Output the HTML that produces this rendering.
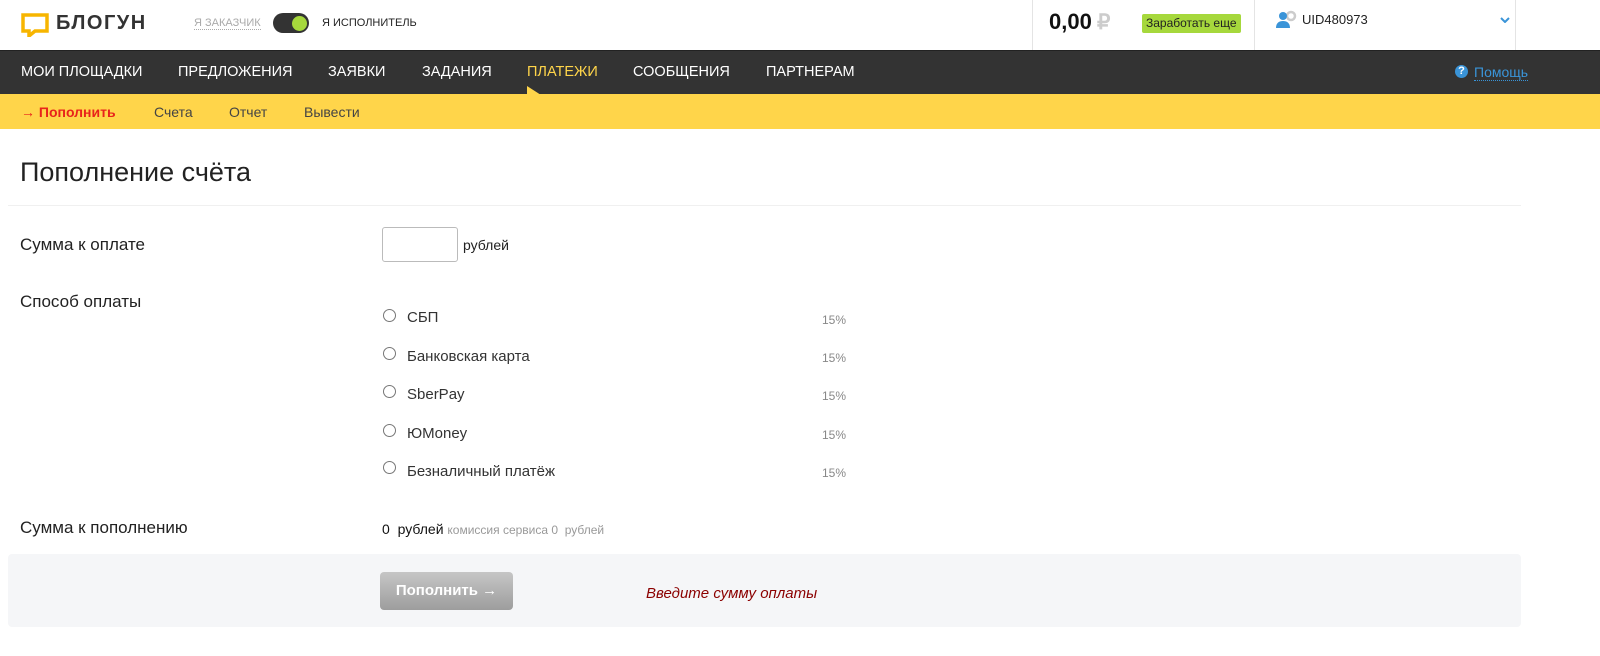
<!DOCTYPE html>
<html><head><meta charset="utf-8"><style>
*{margin:0;padding:0;box-sizing:border-box}
body{width:1600px;height:656px;background:#fff;font-family:"Liberation Sans",Arial,sans-serif;color:#222;position:relative;overflow:hidden}
.a{position:absolute;white-space:nowrap}
.nav{position:absolute;left:0;top:50px;width:1600px;height:44px;background:#333;border-top:1px solid #222}
.nav span{position:absolute;top:13px;color:#fff;font-size:14.5px}
.sub{position:absolute;left:0;top:94px;width:1600px;height:35px;background:#ffd54a}
.sub span{position:absolute;top:10px;font-size:14px;color:#444}
.lbl{font-size:17px;color:#222}
.radio{position:absolute;width:13px;height:13px;border:1px solid #777;border-radius:50%}
.opt{font-size:15px;color:#333}
.pc{font-size:12px;color:#888}
</style></head><body>
<svg class="a" style="left:21px;top:13px" width="28" height="24" viewBox="0 0 28 24"><path d="M2 2h24v16H14l-6 5v-5H2z" fill="none" stroke="#f7b500" stroke-width="3.5" stroke-linejoin="miter"/></svg>
<div class="a" style="left:56px;top:12px;font-size:20px;font-weight:bold;color:#333;letter-spacing:1.5px">БЛОГУН</div>
<div class="a" style="left:194px;top:17px;font-size:11px;color:#aaa;border-bottom:1px dotted #aaa">Я ЗАКАЗЧИК</div>
<div class="a" style="left:273px;top:13px;width:36px;height:20px;border-radius:10px;background:#333"></div>
<div class="a" style="left:292px;top:16px;width:15px;height:15px;border-radius:50%;background:#a6d83c"></div>
<div class="a" style="left:322px;top:17px;font-size:11px;color:#222">Я ИСПОЛНИТЕЛЬ</div>
<div class="a" style="left:1032px;top:0;width:1px;height:50px;background:#e4e4e4"></div>
<div class="a" style="left:1254px;top:0;width:1px;height:50px;background:#e4e4e4"></div>
<div class="a" style="left:1515px;top:0;width:1px;height:50px;background:#e4e4e4"></div>
<div class="a" style="left:1049px;top:9px;font-size:22px;font-weight:bold;color:#111">0,00</div>
<div class="a" style="left:1097px;top:10px;font-size:21px;font-weight:bold;color:#ccc">₽</div>
<div class="a" style="left:1142px;top:14px;height:19px;padding:1px 4px;background:#a6d83c;border-radius:2px;font-size:12px;color:#222;line-height:17px">Заработать еще</div>
<svg class="a" style="left:1275px;top:10px" width="24" height="20" viewBox="0 0 24 20"><circle cx="16" cy="6" r="4" fill="none" stroke="#ccc" stroke-width="2.5"/><circle cx="8" cy="6" r="4" fill="#3a94d8"/><path d="M1 18c0-5 3-7 7-7s7 2 7 7z" fill="#3a94d8"/></svg>
<div class="a" style="left:1302px;top:12px;font-size:13px;color:#222">UID480973</div>
<svg class="a" style="left:1500px;top:17px" width="10" height="6"><path d="M1 1l4 4 4-4" fill="none" stroke="#3a94d8" stroke-width="2"/></svg>
<div class="nav">
<span style="left:21px">МОИ ПЛОЩАДКИ</span>
<span style="left:178px">ПРЕДЛОЖЕНИЯ</span>
<span style="left:328px">ЗАЯВКИ</span>
<span style="left:422px">ЗАДАНИЯ</span>
<span style="left:527px;color:#ffd54a">ПЛАТЕЖИ</span>
<span style="left:633px">СООБЩЕНИЯ</span>
<span style="left:766px">ПАРТНЕРАМ</span>
<span style="left:1455px;top:14px;width:13px;height:13px;border-radius:50%;background:#3a94d8;font-size:11px;font-weight:bold;text-align:center;line-height:13px">?</span>
<span style="left:1474px;top:13px;font-size:14px;color:#3a94d8;border-bottom:1px dotted #3a94d8">Помощь</span>
</div>
<svg class="a" style="left:527px;top:86px" width="14" height="9"><path d="M0 0L14 9H0z" fill="#ffd54a"/></svg>
<div class="sub">
<span style="left:21px;color:#e8231b;font-weight:bold">→ Пополнить</span>
<span style="left:154px">Счета</span>
<span style="left:229px">Отчет</span>
<span style="left:304px">Вывести</span>
</div>
<div class="a" style="left:20px;top:157px;font-size:27px;color:#222">Пополнение счёта</div>
<div class="a" style="left:8px;top:205px;width:1513px;height:1px;background:#f0f0f0"></div>
<div class="a lbl" style="left:20px;top:235px">Сумма к оплате</div>
<div class="a" style="left:382px;top:227px;width:76px;height:35px;border:1px solid #bbb;border-radius:3px"></div>
<div class="a" style="left:463px;top:237px;font-size:14px;color:#222">рублей</div>
<div class="a lbl" style="left:20px;top:292px">Способ оплаты</div>

<div class="radio" style="left:383px;top:309px"></div><div class="a opt" style="left:407px;top:309px">СБП</div><div class="a pc" style="left:822px;top:313px">15%</div>
<div class="radio" style="left:383px;top:347px"></div><div class="a opt" style="left:407px;top:348px">Банковская карта</div><div class="a pc" style="left:822px;top:351px">15%</div>
<div class="radio" style="left:383px;top:385px"></div><div class="a opt" style="left:407px;top:386px">SberPay</div><div class="a pc" style="left:822px;top:389px">15%</div>
<div class="radio" style="left:383px;top:424px"></div><div class="a opt" style="left:407px;top:425px">ЮMoney</div><div class="a pc" style="left:822px;top:428px">15%</div>
<div class="radio" style="left:383px;top:461px"></div><div class="a opt" style="left:407px;top:463px">Безналичный платёж</div><div class="a pc" style="left:822px;top:466px">15%</div>

<div class="a lbl" style="left:20px;top:518px">Сумма к пополнению</div>
<div class="a" style="left:382px;top:521px;font-size:14px;color:#111">0&nbsp; рублей <span style="font-size:12px;color:#999">комиссия сервиса 0&nbsp; рублей</span></div>
<div class="a" style="left:8px;top:554px;width:1513px;height:73px;background:#f5f6f8;border-radius:4px"></div>
<div class="a" style="left:380px;top:572px;width:133px;height:38px;border-radius:4px;background:linear-gradient(#c6c6c6,#9d9d9d);color:#fff;font-weight:bold;font-size:15px;text-align:center;line-height:37px">Пополнить →</div>
<div class="a" style="left:646px;top:585px;font-size:15px;font-style:italic;color:#8b0000">Введите сумму оплаты</div>
</body></html>
